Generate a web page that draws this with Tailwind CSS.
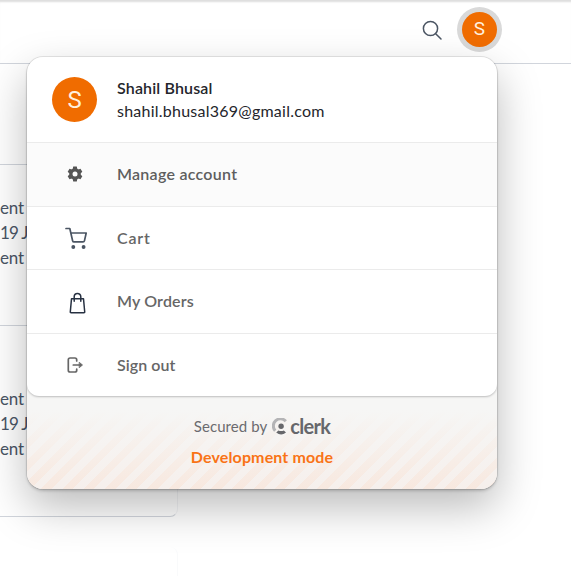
<!DOCTYPE html>
<html lang="en">
<head>
<meta charset="utf-8">
<title>Account</title>
<script src="https://cdn.jsdelivr.net/npm/@tailwindcss/browser@4"></script>
</head>
<body class="relative h-[576px] w-[571px] overflow-hidden bg-white font-[Lato,sans-serif] text-[17px] text-gray-600">
<header class="flex h-16 items-start justify-end gap-[13px] border-b border-gray-300 pr-[69px] pt-[7px] shadow-[inset_0_3px_2px_-1px_#dedede]">
  <svg class="mt-[11px] size-6" viewBox="0 0 24 24" fill="none" stroke="#4b5563" stroke-width="1.5" stroke-linecap="round"><circle cx="10.5" cy="10.5" r="7.1"/><path d="m15.7 15.7 5.3 5.3"/></svg>
  <button class="flex size-[45px] items-center justify-center rounded-full bg-[#d9d9d9]"><span class="flex size-[35px] items-center justify-center rounded-full bg-[#f06c00] font-[Roboto,sans-serif] text-[19px] text-[#fff0df]">S</span></button>
</header>
<main class="w-[178px]">
  <div class="h-[101px] border-b border-gray-300"></div>
  <section class="h-[161px] border-b border-gray-300 pt-[30px] leading-[25px]">
    <div class="whitespace-nowrap"><p class="tracking-[-0.2px]">ent</p><p class="tracking-[-0.8px]">19 Jan</p><p class="tracking-[-0.2px]">ent</p></div>
  </section>
  <section class="mt-[30px] h-[161px] rounded-r-lg border-b border-r border-r-gray-100 border-b-gray-300 pt-[30px] leading-[25px]">
    <div class="whitespace-nowrap"><p class="tracking-[-0.2px]">ent</p><p class="tracking-[-0.8px]">19 Jan</p><p class="tracking-[-0.2px]">ent</p></div>
  </section>
  <section class="mt-[30px] h-[29px] rounded-tr-lg border-r border-gray-50"></section>
</main>
<div class="absolute left-[27px] top-[57px] flex h-[432px] w-[470px] flex-col overflow-hidden rounded-2xl bg-[#f6f6f5] shadow-[0_0_0_1px_rgba(0,0,0,0.09),0_18px_44px_0_rgba(0,0,0,0.27),0_2px_3px_rgba(0,0,0,0.18)]">
  <div class="relative z-10 h-[339px] shrink-0 overflow-hidden rounded-b-xl bg-white shadow-[0_1px_2px_#bdbdbd]">
    <div class="flex h-[86px] items-center gap-5 border-b border-[#ebebeb] pl-[25px]">
      <span class="flex size-[45px] items-center justify-center rounded-full bg-[#f06c00] font-[Roboto,sans-serif] text-[24px] text-[#fff0df]">S</span>
      <div class="whitespace-nowrap pb-[2px] text-[16px] leading-[23px] text-[#24252b]"><p class="font-semibold tracking-[0.15px]">Shahil Bhusal</p><p class="tracking-[0.24px]">shahil.bhusal369@gmail.com</p></div>
    </div>
    <div class="flex h-16 items-center border-b border-[#ebebeb] bg-[#fbfbfb] pl-[38px]">
      <svg class="mr-[32px] size-5" viewBox="0 0 20 20"><g transform="translate(0 -1)"><g fill="#555"><circle cx="10" cy="10" r="5.7"/><path d="M8.2 2.6h3.6l.6 3H7.6zM8.2 17.4h3.6l.6-3H7.6z"/><path d="M8.2 2.6h3.6l.6 3H7.6zM8.2 17.4h3.6l.6-3H7.6z" transform="rotate(60 10 10)"/><path d="M8.2 2.6h3.6l.6 3H7.6zM8.2 17.4h3.6l.6-3H7.6z" transform="rotate(120 10 10)"/></g><circle cx="10" cy="10" r="2.5" fill="#fbfbfb"/></g></svg>
      <span class="pb-[2px] text-[16px] font-semibold tracking-[0.27px] text-[#5e5e5e]">Manage account</span>
    </div>
    <div class="flex h-[63px] items-center border-b border-[#ebebeb] pl-[37px]">
      <svg class="mr-[29px] size-6" viewBox="0 0 24 24" fill="none" stroke="#4b5563" stroke-width="1.7" stroke-linecap="round" stroke-linejoin="round"><path d="M2 2.500h3.800l2.800 12.200q.3 1.200 1.400 1.200h9q1.200 0 1.500-1.300L22.200 7H6.800"/><circle cx="9.300" cy="21" r="1.100" fill="#4b5563"/><circle cx="19.600" cy="21" r="1.100" fill="#4b5563"/></svg>
      <span class="text-[16px] font-semibold tracking-[0.8px] text-[#666]">Cart</span>
    </div>
    <div class="flex h-16 items-center border-b border-[#ebebeb] pl-[39px]">
      <svg class="mr-[27px] mt-[2px] size-6" viewBox="0 0 24 24" fill="none" stroke="#273142" stroke-width="1.5" stroke-linecap="round" stroke-linejoin="round"><path d="M5.500 7.700h12l1.200 13.100q.1.900-.8.900H5.100q-.9 0-.8-.9zM8.200 10.300V5.700a3.300 3.300 0 0 1 6.600 0v4.600"/></svg>
      <span class="pb-[2px] text-[16px] font-semibold tracking-[0.15px] text-[#666]">My Orders</span>
    </div>
    <div class="flex h-[62px] items-center pl-[38px]">
      <svg class="mr-[32px] size-5" viewBox="0 0 20 20" fill="none" stroke="#666" stroke-width="1.700" stroke-linecap="round" stroke-linejoin="round"><path d="M11.700 6V4.800Q11.700 3 9.900 3H5.100Q3.300 3 3.300 4.800v10.400Q3.300 17 5.100 17h4.800q1.800 0 1.800-1.800V14M8.300 10h7"/><path d="m14.500 7.500 3 2.500-3 2.500z" fill="#666" stroke-width=".8"/></svg>
      <span class="text-[16px] font-semibold tracking-[0.05px] text-[#666]">Sign out</span>
    </div>
  </div>
  <div class="relative flex flex-1 flex-col items-center bg-[linear-gradient(180deg,#f6f6f5_15%,rgba(246,246,245,0.1)_110%),repeating-linear-gradient(-45deg,#f8e5da_0px,#f8e5da_7.5px,#f6eeea_7.5px,#f6eeea_15px)] pt-[18px]">
    <div class="flex h-6 items-center whitespace-nowrap text-[15px] text-[#6b6b6f]"><span class="tracking-[0.08px]">Secured by</span>
      <svg class="ml-[5px] mr-[1px] size-[17px]" viewBox="0 0 17 17"><path d="M13.800 3.200A6.700 6.700 0 0 0 3.200 12.800" fill="none" stroke="#b4b4b6" stroke-width="3"/><circle cx="9.100" cy="8.300" r="2.700" fill="#66676b"/><path d="M4.200 14.500 6.400 12.400q2.800 1.400 5.400 0l2.200 2.100q-4.800 4-9.800 0" fill="#66676b"/></svg>
      <span class="text-[20px] font-bold leading-none tracking-[-0.7px] text-[#66676b]">clerk</span>
    </div>
    <p class="mt-[7px] whitespace-nowrap text-[16px] font-bold leading-[24px] tracking-[0.13px] text-[#f97316]">Development mode</p>
  </div>
</div>
</body>
</html>
